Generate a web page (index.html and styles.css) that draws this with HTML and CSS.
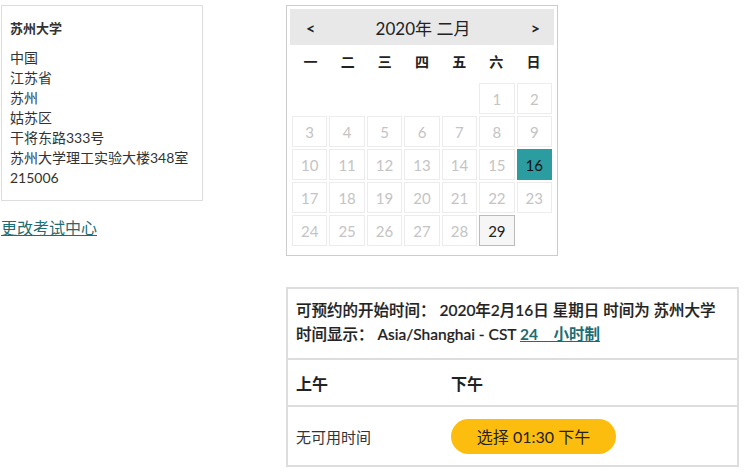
FILE: index.html
```html
<!DOCTYPE html>
<html lang="zh-CN">
<head>
    <meta charset="UTF-8">
    <title>预约考试</title>
    <link rel="stylesheet" href="styles.css">
</head>
<body>
    <div class="page">
        <div class="sidebar">
            <div class="address">
                <div class="center-name">苏州大学</div>
                <div class="lines">
                    中国<br>
                    江苏省<br>
                    苏州<br>
                    姑苏区<br>
                    干将东路333号<br>
                    苏州大学理工实验大楼348室<br>
                    215006
                </div>
            </div>
            <a class="change-link" href="#">更改考试中心</a>
        </div>

        <div class="main">
            <div class="calendar">
                <div class="cal-head">
                    <span class="nav">&lt;</span>
                    <span class="month">2020年 二月</span>
                    <span class="nav">&gt;</span>
                </div>
                <div class="weekdays">
                    <span>一</span><span>二</span><span>三</span><span>四</span><span>五</span><span>六</span><span>日</span>
                </div>
                <div class="days">
                    <span class="empty"></span><span class="empty"></span><span class="empty"></span><span class="empty"></span><span class="empty"></span>
                    <span class="day">1</span><span class="day">2</span>
                    <span class="day">3</span><span class="day">4</span><span class="day">5</span><span class="day">6</span><span class="day">7</span><span class="day">8</span><span class="day">9</span>
                    <span class="day">10</span><span class="day">11</span><span class="day">12</span><span class="day">13</span><span class="day">14</span><span class="day">15</span><span class="day selected">16</span>
                    <span class="day">17</span><span class="day">18</span><span class="day">19</span><span class="day">20</span><span class="day">21</span><span class="day">22</span><span class="day">23</span>
                    <span class="day">24</span><span class="day">25</span><span class="day">26</span><span class="day">27</span><span class="day">28</span><span class="day available">29</span><span class="empty"></span>
                </div>
            </div>

            <div class="times">
                <div class="times-head">
                    可预约的开始时间： 2020年2月16日 星期日 时间为 苏州大学<br>
                    时间显示： Asia/Shanghai - CST <a href="#">24　小时制</a>
                </div>
                <div class="times-row labels">
                    <div class="col-am">上午</div>
                    <div class="col-pm">下午</div>
                </div>
                <div class="times-row slots">
                    <div class="col-am">无可用时间</div>
                    <div class="col-pm"><button class="slot-btn">选择 01:30 下午</button></div>
                </div>
            </div>
        </div>
    </div>
</body>
</html>
```

FILE: styles.css
```css
* {
    margin: 0;
    padding: 0;
    box-sizing: border-box;
}

body {
    font-family: 'Lato', 'Noto Sans CJK SC', sans-serif;
    color: #333;
    background: #fff;
}

.page {
    display: flex;
    align-items: flex-start;
    padding: 5px 0 0 1px;
}

/* left column */
.sidebar {
    width: 202px;
}

.address {
    border: 1px solid #ddd;
    padding: 12px 8px 12px 8px;
    font-size: 14px;
    line-height: 20px;
}

.center-name {
    font-weight: bold;
    font-size: 13px;
    margin-bottom: 10px;
}

.change-link {
    display: inline-block;
    margin-top: 14px;
    font-size: 16px;
    color: #1d6d73;
}

/* calendar */
.main {
    margin-left: 83px;
}

.calendar {
    width: 272px;
    border: 1px solid #ccc;
    padding: 3px 3px 7px;
}

.cal-head {
    display: flex;
    justify-content: space-between;
    align-items: center;
    height: 36px;
    background: #e8e8e8;
    padding: 0 14px 0 16px;
    color: #222;
}

.cal-head .month {
    font-size: 17px;
}

.cal-head .nav {
    font-size: 16px;
    font-weight: bold;
}

.weekdays {
    display: grid;
    grid-template-columns: repeat(7, 1fr);
    height: 36px;
    padding: 0 2px 4px;
    align-items: center;
    text-align: center;
    font-size: 14px;
    font-weight: bold;
    color: #222;
}

.days {
    display: grid;
    grid-template-columns: repeat(7, 1fr);
    gap: 2px;
    padding: 2px;
}

.days span {
    height: 31px;
    display: flex;
    align-items: center;
    justify-content: center;
    font-size: 15px;
}

.day {
    border: 1px solid #ececec;
    color: #c4c4c4;
}

.day.selected {
    background: #2b9ca0;
    border-color: #2b9ca0;
    color: #111;
}

.day.available {
    background: #f6f6f6;
    border-color: #bbb;
    color: #222;
}

/* time slots */
.times {
    margin-top: 31px;
    width: 453px;
    border: 2px solid #ddd;
}

.times-head {
    padding: 9px 6px 12px 8px;
    font-size: 15.5px;
    line-height: 24px;
    font-weight: 500;
    white-space: nowrap;
    color: #222;
    -webkit-text-stroke: 0.2px #222;
}

.times-head a {
    color: #1d6d73;
    font-weight: bold;
    -webkit-text-stroke: 0;
}

.times-row {
    display: flex;
    align-items: center;
    border-top: 2px solid #ddd;
}

.times-row .col-am {
    width: 163px;
    padding-left: 8px;
}

.labels {
    height: 47px;
    font-size: 16px;
    font-weight: bold;
    color: #222;
}

.slots {
    height: 60px;
    font-size: 15px;
}

.slot-btn {
    width: 165px;
    height: 35px;
    border: none;
    border-radius: 18px;
    background: #fdbd0e;
    color: #222;
    font-family: inherit;
    font-size: 16px;
    cursor: pointer;
}
```
